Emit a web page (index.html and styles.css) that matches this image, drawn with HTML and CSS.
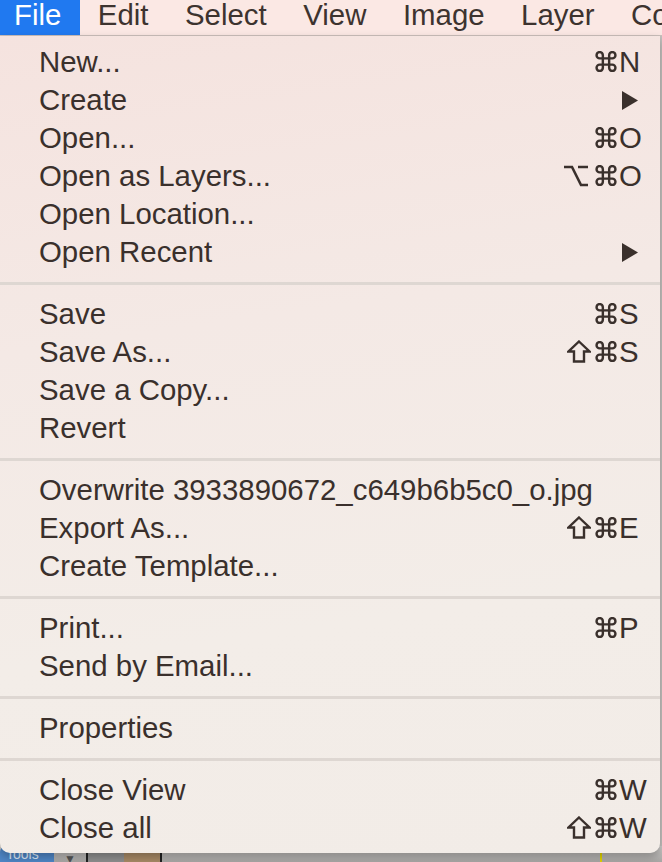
FILE: index.html
```html
<!DOCTYPE html>
<html lang="en">
<head>
<meta charset="utf-8">
<title>File menu</title>
<link rel="stylesheet" href="styles.css">
</head>
<body>
<header class="menubar">
  <span class="bar-item active">File</span>
  <span class="bar-item">Edit</span>
  <span class="bar-item">Select</span>
  <span class="bar-item">View</span>
  <span class="bar-item">Image</span>
  <span class="bar-item">Layer</span>
  <span class="bar-item">Colors</span>
</header>
<main class="workspace">
  <div class="toolstrip">
    <span class="tools-btn">Tools</span>
    <span class="drop">▼</span>
    <span class="vline"></span>
    <span class="swatch gray"></span>
    <span class="swatch brown"></span>
    <span class="vline"></span>
    <span class="fill"></span>
    <span class="vline right"></span>
  </div>
  <nav class="menu">
    <div class="group">
      <div class="item"><span>New...</span><span class="keys"><svg class="ic cmd" viewBox="2 2 20 20"><path d="M18 3a3 3 0 0 0-3 3v12a3 3 0 0 0 3 3 3 3 0 0 0 3-3 3 3 0 0 0-3-3H6a3 3 0 0 0-3 3 3 3 0 0 0 3 3 3 3 0 0 0 3-3V6a3 3 0 0 0-3-3 3 3 0 0 0-3 3 3 3 0 0 0 3 3h12a3 3 0 0 0 3-3 3 3 0 0 0-3-3z"/></svg><span class="key">N</span></span></div>
      <div class="item"><span>Create</span><svg class="arrow" viewBox="0 0 16 19"><polygon points="0,0 16,9.5 0,19"/></svg></div>
      <div class="item"><span>Open...</span><span class="keys"><svg class="ic cmd" viewBox="2 2 20 20"><path d="M18 3a3 3 0 0 0-3 3v12a3 3 0 0 0 3 3 3 3 0 0 0 3-3 3 3 0 0 0-3-3H6a3 3 0 0 0-3 3 3 3 0 0 0 3 3 3 3 0 0 0 3-3V6a3 3 0 0 0-3-3 3 3 0 0 0-3 3 3 3 0 0 0 3 3h12a3 3 0 0 0 3-3 3 3 0 0 0-3-3z"/></svg><span class="key">O</span></span></div>
      <div class="item"><span>Open as Layers...</span><span class="keys"><svg class="ic opt" viewBox="0 0 24 22"><path d="M0 2H8L17 20H24M14 2H24"/></svg><svg class="ic cmd" viewBox="2 2 20 20"><path d="M18 3a3 3 0 0 0-3 3v12a3 3 0 0 0 3 3 3 3 0 0 0 3-3 3 3 0 0 0-3-3H6a3 3 0 0 0-3 3 3 3 0 0 0 3 3 3 3 0 0 0 3-3V6a3 3 0 0 0-3-3 3 3 0 0 0-3 3 3 3 0 0 0 3 3h12a3 3 0 0 0 3-3 3 3 0 0 0-3-3z"/></svg><span class="key">O</span></span></div>
      <div class="item"><span>Open Location...</span></div>
      <div class="item"><span>Open Recent</span><svg class="arrow" viewBox="0 0 16 19"><polygon points="0,0 16,9.5 0,19"/></svg></div>
    </div>
    <div class="sep"></div>
    <div class="group">
      <div class="item"><span>Save</span><span class="keys"><svg class="ic cmd" viewBox="2 2 20 20"><path d="M18 3a3 3 0 0 0-3 3v12a3 3 0 0 0 3 3 3 3 0 0 0 3-3 3 3 0 0 0-3-3H6a3 3 0 0 0-3 3 3 3 0 0 0 3 3 3 3 0 0 0 3-3V6a3 3 0 0 0-3-3 3 3 0 0 0-3 3 3 3 0 0 0 3 3h12a3 3 0 0 0 3-3 3 3 0 0 0-3-3z"/></svg><span class="key">S</span></span></div>
      <div class="item"><span>Save As...</span><span class="keys"><svg class="ic shift" viewBox="0 0 24 23"><path d="M12 1.5L22.5 11.5H17V21.5H7V11.5H1.5Z"/></svg><svg class="ic cmd" viewBox="2 2 20 20"><path d="M18 3a3 3 0 0 0-3 3v12a3 3 0 0 0 3 3 3 3 0 0 0 3-3 3 3 0 0 0-3-3H6a3 3 0 0 0-3 3 3 3 0 0 0 3 3 3 3 0 0 0 3-3V6a3 3 0 0 0-3-3 3 3 0 0 0-3 3 3 3 0 0 0 3 3h12a3 3 0 0 0 3-3 3 3 0 0 0-3-3z"/></svg><span class="key">S</span></span></div>
      <div class="item"><span>Save a Copy...</span></div>
      <div class="item"><span>Revert</span></div>
    </div>
    <div class="sep"></div>
    <div class="group">
      <div class="item"><span>Overwrite 3933890672_c649b6b5c0_o.jpg</span></div>
      <div class="item"><span>Export As...</span><span class="keys"><svg class="ic shift" viewBox="0 0 24 23"><path d="M12 1.5L22.5 11.5H17V21.5H7V11.5H1.5Z"/></svg><svg class="ic cmd" viewBox="2 2 20 20"><path d="M18 3a3 3 0 0 0-3 3v12a3 3 0 0 0 3 3 3 3 0 0 0 3-3 3 3 0 0 0-3-3H6a3 3 0 0 0-3 3 3 3 0 0 0 3 3 3 3 0 0 0 3-3V6a3 3 0 0 0-3-3 3 3 0 0 0-3 3 3 3 0 0 0 3 3h12a3 3 0 0 0 3-3 3 3 0 0 0-3-3z"/></svg><span class="key">E</span></span></div>
      <div class="item"><span>Create Template...</span></div>
    </div>
    <div class="sep"></div>
    <div class="group">
      <div class="item"><span>Print...</span><span class="keys"><svg class="ic cmd" viewBox="2 2 20 20"><path d="M18 3a3 3 0 0 0-3 3v12a3 3 0 0 0 3 3 3 3 0 0 0 3-3 3 3 0 0 0-3-3H6a3 3 0 0 0-3 3 3 3 0 0 0 3 3 3 3 0 0 0 3-3V6a3 3 0 0 0-3-3 3 3 0 0 0-3 3 3 3 0 0 0 3 3h12a3 3 0 0 0 3-3 3 3 0 0 0-3-3z"/></svg><span class="key">P</span></span></div>
      <div class="item"><span>Send by Email...</span></div>
    </div>
    <div class="sep"></div>
    <div class="group">
      <div class="item"><span>Properties</span></div>
    </div>
    <div class="sep"></div>
    <div class="group">
      <div class="item"><span>Close View</span><span class="keys"><svg class="ic cmd" viewBox="2 2 20 20"><path d="M18 3a3 3 0 0 0-3 3v12a3 3 0 0 0 3 3 3 3 0 0 0 3-3 3 3 0 0 0-3-3H6a3 3 0 0 0-3 3 3 3 0 0 0 3 3 3 3 0 0 0 3-3V6a3 3 0 0 0-3-3 3 3 0 0 0-3 3 3 3 0 0 0 3 3h12a3 3 0 0 0 3-3 3 3 0 0 0-3-3z"/></svg><span class="key">W</span></span></div>
      <div class="item"><span>Close all</span><span class="keys"><svg class="ic shift" viewBox="0 0 24 23"><path d="M12 1.5L22.5 11.5H17V21.5H7V11.5H1.5Z"/></svg><svg class="ic cmd" viewBox="2 2 20 20"><path d="M18 3a3 3 0 0 0-3 3v12a3 3 0 0 0 3 3 3 3 0 0 0 3-3 3 3 0 0 0-3-3H6a3 3 0 0 0-3 3 3 3 0 0 0 3 3 3 3 0 0 0 3-3V6a3 3 0 0 0-3-3 3 3 0 0 0-3 3 3 3 0 0 0 3 3h12a3 3 0 0 0 3-3 3 3 0 0 0-3-3z"/></svg><span class="key">W</span></span></div>
    </div>
  </nav>
</main>
</body>
</html>
```

FILE: styles.css
```css
* { box-sizing: border-box; }

html, body {
  margin: 0;
  padding: 0;
  width: 662px;
  height: 862px;
  overflow: hidden;
}

body {
  display: flex;
  flex-direction: column;
  font-family: "Liberation Sans", Arial, sans-serif;
  color: #3b312d;
  background: #b9b6b3;
}

.menubar {
  display: flex;
  height: 36px;
  background: #fbe8e4;
  border-bottom: 1px solid #cbbfbb;
  white-space: nowrap;
  overflow: hidden;
  flex: none;
}

.bar-item {
  font-size: 29.4px;
  line-height: 30px;
  height: 35px;
  padding: 0 18.5px 0 18px;
  color: #3d332f;
  flex: none;
}

.bar-item.active {
  padding-left: 14px;
  padding-right: 18.5px;
  background: #2079f0;
  color: #ffffff;
}

.workspace {
  position: relative;
  flex: 1;
  display: flex;
  flex-direction: column;
  justify-content: flex-end;
  background: #c4c1be;
}

.toolstrip {
  display: flex;
  align-items: stretch;
  height: 16px;
  background: linear-gradient(#cfcdcb, #a9a7a5);
}

.tools-btn {
  width: 54px;
  background: #4f86c6;
  color: #dfe9f6;
  font-size: 14px;
  border-radius: 6px 6px 0 0;
  padding-left: 6px;
  overflow: hidden;
}

.drop {
  width: 32px;
  font-size: 12px;
  color: #555;
  text-align: center;
  padding-top: 6px;
}

.vline {
  width: 2px;
  background: #222;
}

.vline.right {
  margin-left: auto;
  margin-right: 60px;
  background: #e2d400;
}

.swatch { width: 36px; }
.swatch.gray { background: #8f8f8f; }
.swatch.brown { background: #a88a66; }
.fill { flex: 1; }

.menu {
  position: absolute;
  top: 0;
  left: 0;
  width: 660px;
  padding: 7px 0 6px;
  background: linear-gradient(172deg, #f5e3df 0%, #f4e9e5 35%, #f3ede8 70%, #f2ece7 100%);
  border-radius: 0 0 10px 10px;
  box-shadow: 0 4px 10px rgba(0, 0, 0, 0.28);
}

.item {
  display: flex;
  justify-content: space-between;
  align-items: center;
  height: 38px;
  padding: 0 13px 0 39px;
  font-size: 29.4px;
  line-height: 38px;
  white-space: nowrap;
  color: #3a302c;
}

.keys {
  display: flex;
  align-items: center;
}

.key {
  width: 28px;
  margin-left: 2px;
}

.ic {
  fill: none;
  stroke: #3a302c;
  stroke-linejoin: miter;
}

.ic.cmd {
  width: 22px;
  height: 21px;
  stroke-width: 2.3;
  margin-top: -1px;
}

.ic.shift {
  width: 24px;
  height: 23px;
  stroke-width: 2.4;
  margin-right: 4px;
  margin-top: -1px;
}

.ic.opt {
  width: 24px;
  height: 22px;
  stroke-width: 2.6;
  margin-right: 7px;
  margin-top: -1px;
}

.arrow {
  width: 16px;
  height: 19px;
  margin-right: 9px;
  fill: #3a302c;
}

.sep {
  height: 24px;
  padding-top: 11px;
}

.sep::before {
  content: "";
  display: block;
  height: 3px;
  background: #ded7d2;
}
```
